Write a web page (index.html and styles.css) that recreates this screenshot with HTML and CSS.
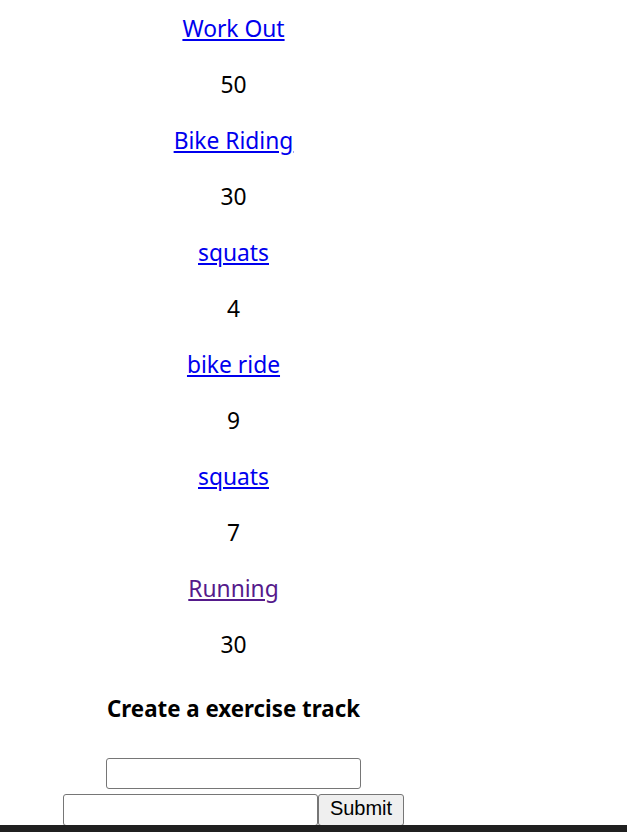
FILE: index.html
```html
<!DOCTYPE html>
<html>
<head>
<meta charset="utf-8">
<link rel="stylesheet" href="styles.css">
</head>
<body>
<div class="list">
  <p class="item first"><a href="#a">Work Out</a></p>
  <p class="item">50</p>
  <p class="item"><a href="#b">Bike Riding</a></p>
  <p class="item">30</p>
  <p class="item"><a href="#c">squats</a></p>
  <p class="item">4</p>
  <p class="item"><a href="#d">bike ride</a></p>
  <p class="item">9</p>
  <p class="item"><a href="#e">squats</a></p>
  <p class="item">7</p>
  <p class="item"><a class="visited" href="#f">Running</a></p>
  <p class="item">30</p>
  <form class="form">
    <h3 class="title">Create a exercise track</h3>
    <div class="row"><input class="field" type="text"></div>
    <div class="row row2"><input class="field" type="text"><button class="btn" type="button">Submit</button></div>
  </form>
</div>
<div class="taskbar"></div>
</body>
</html>
```
FILE: styles.css
```css
html, body {
  margin: 0;
  padding: 0;
  background: #fff;
}
body {
  font-family: "Noto Sans", "Open Sans", sans-serif;
  font-size: 22.8px;
  color: #000;
  overflow: hidden;
}
.list {
  width: 467px;
  text-align: center;
}
.item {
  margin: 26px 0;
  line-height: 30px;
}
.item.first {
  margin-top: 14px;
}
a {
  color: #0000ee;
}
a.visited {
  color: #551a8b;
}
.form {
  margin: 0;
}
.title {
  font-size: 22.3px;
  font-weight: bold;
  line-height: 30px;
  margin: 34px 0 34px;
}
.row {
  display: flex;
  justify-content: center;
  height: 31px;
}
.row2 {
  margin-top: 5px;
  height: 32px;
}
.field {
  box-sizing: border-box;
  width: 255px;
  height: 31px;
  margin: 0;
  border: 1px solid #767676;
  border-radius: 3px;
  padding: 1px 3px;
  background: #fff;
}
.row2 .field {
  height: 32px;
}
.btn {
  box-sizing: border-box;
  width: 86px;
  height: 32px;
  margin: 0;
  padding: 0 0 4px;
  font-family: "Liberation Sans", Arial, sans-serif;
  font-size: 20px;
  color: #000;
  background: #efefef;
  border: 1px solid #767676;
  border-radius: 3px;
}
.taskbar {
  position: fixed;
  left: 0;
  right: 0;
  bottom: 0;
  height: 7px;
  background: #202020;
}
```
